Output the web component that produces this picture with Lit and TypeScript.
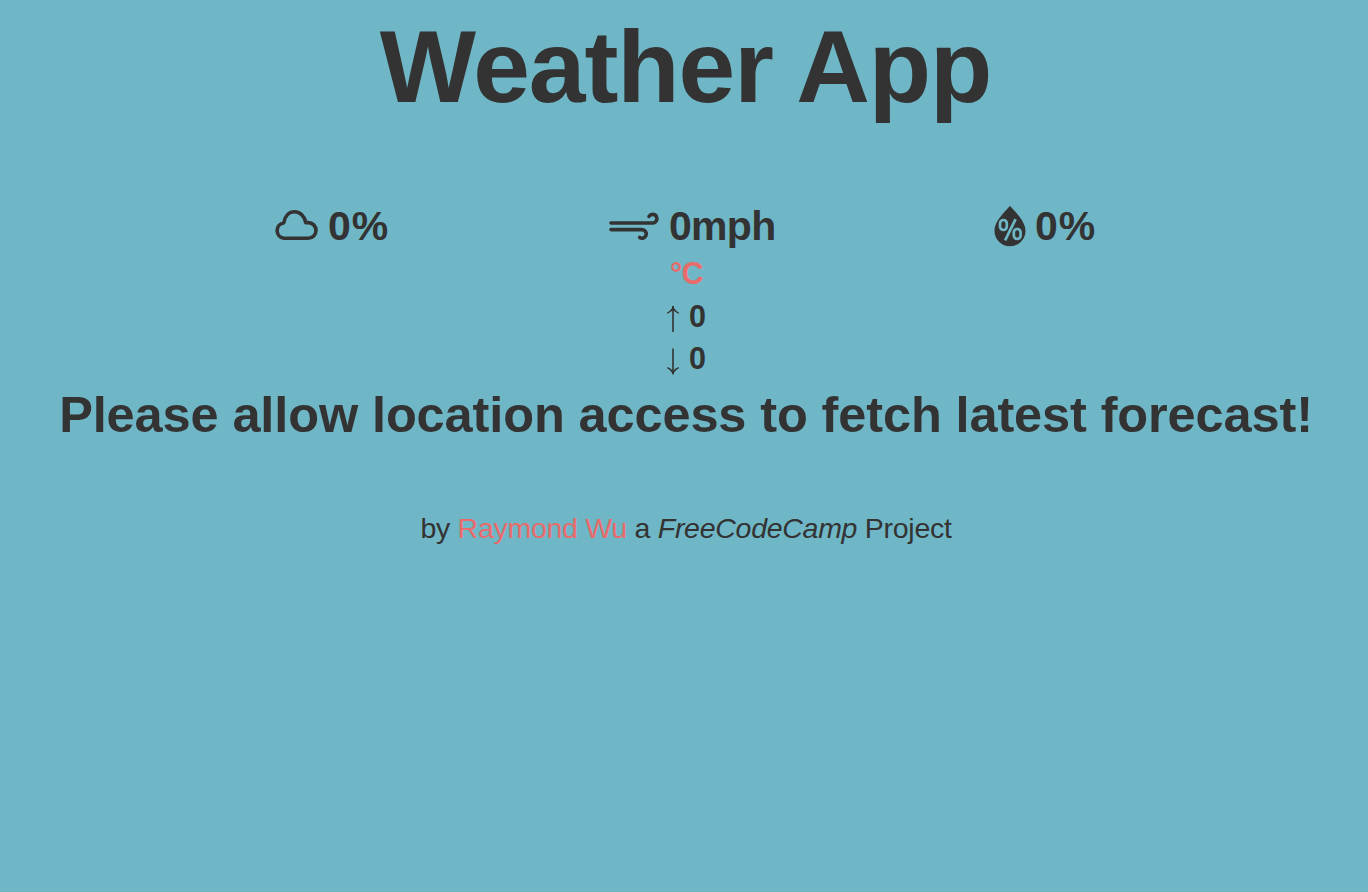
import { LitElement, html, css } from "lit";
import { customElement } from "lit/decorators.js";

@customElement("app-root")
export class AppRoot extends LitElement {
  static styles = css`
    :host {
      display: block;
      min-height: 100vh;
      box-sizing: border-box;
      background: #6fb7c6;
      color: #333;
      font-family: "Liberation Sans", Arial, sans-serif;
      overflow: hidden;
    }
    h1, h2, p { margin: 0; text-align: center; white-space: nowrap; }
    h1 {
      padding: 12px 0 0 3px;
      font-size: 102px;
      line-height: 110px;
      letter-spacing: -1.1px;
    }
    .stats {
      display: grid;
      grid-template-columns: 335px 385px 200px;
      height: 50px;
      margin-top: 79px;
      padding-left: 274px;
      font-size: 41px;
      font-weight: bold;
      line-height: 51px;
    }
    .stat { display: flex; align-items: flex-start; white-space: nowrap; }
    .stat svg { flex: none; display: block; height: 50px; overflow: visible; }
    .pct { margin-left: 10px; letter-spacing: 1px; }
    .humidity { margin-left: 9px; }
    .mph { margin-left: 10px; letter-spacing: -0.7px; }
    .temps { display: flex; flex-direction: column; align-items: center; padding-left: 5px; font-size: 30.5px; font-weight: bold; }
    .unit { height: 42px; line-height: 45px; color: #e96b6b; letter-spacing: -0.5px; }
    .limit { display: flex; height: 42px; line-height: 47px; }
    .limit svg { width: 12px; height: 42px; margin: 3px 10px 0 0; }
    h2 { padding: 10px 0 0 4px; font-size: 50.5px; line-height: 56px; letter-spacing: -0.12px; }
    p { padding: 65px 0 0 4px; font-size: 28.5px; line-height: 40px; letter-spacing: -0.28px; }
    a { color: #e96b6b; text-decoration: none; }
  `;

  render() {
    return html`
      <h1>Weather App</h1>
      <div class="stats">
        <div class="stat">
          <svg width="44" viewBox="0 0 44 50" fill="none" stroke="#333" stroke-width="3.6" stroke-linejoin="round">
            <path d="M9.8 37.2h24.4a7.8 7.8 0 0 0 0-15.6h-2.5C30.8 15.6 26.4 10.8 20.6 10.8c-5.4 0-9.5 4-10.6 10.4l-.6.8a7.7 7.7 0 0 0 .4 15.2z" />
          </svg>
          <span class="pct">0%</span>
        </div>
        <div class="stat">
          <svg width="50" viewBox="0 0 50 50" fill="none" stroke="#333" stroke-width="3.6" stroke-linecap="round">
            <path d="M2 22H43.6a4.3 4.3 0 1 0-3.6-6.6M2 28.6H33a4.3 4.3 0 1 1-2.4 7.9" />
          </svg>
          <span class="mph">0mph</span>
        </div>
        <div class="stat">
          <svg width="32" viewBox="0 0 32 50">
            <path fill="#333" d="M16 4.8C18 8 31.5 19 31.5 29.8a15.5 15.5 0 0 1-31 0C.5 19 14 8 16 4.8z" />
            <g fill="none" stroke="#6fb7c6" stroke-width="2.7">
              <rect x="6" y="19" width="6.8" height="10" rx="3.4" />
              <rect x="19.8" y="28" width="6.8" height="10" rx="3.4" />
              <path d="M21.6 18.1 11.1 39.4" />
            </g>
          </svg>
          <span class="pct humidity">0%</span>
        </div>
      </div>
      <div class="temps">
        <div class="unit">°C</div>
        <div class="limit">
          <svg viewBox="0 0 12 42" fill="none" stroke="#333" stroke-width="1.6">
            <path d="M6 36V10" /><path fill="#333" stroke="none" d="M6 9.5C7 13 9.3 15.3 12 16.5v1.2C9.4 16.8 7.5 15.6 6 13.8 4.5 15.6 2.6 16.8 0 17.7v-1.2C2.7 15.3 5 13 6 9.5z" />
          </svg>0
        </div>
        <div class="limit">
          <svg viewBox="0 0 12 42" fill="none" stroke="#333" stroke-width="1.6">
            <path d="M6 10.5V36" /><path fill="#333" stroke="none" d="M6 37.2C7 33.7 9.3 31.4 12 30.2V29C9.4 29.9 7.5 31.1 6 32.9 4.5 31.1 2.6 29.9 0 29v1.2C2.7 31.4 5 33.7 6 37.2z" />
          </svg>0
        </div>
      </div>
      <h2>Please allow location access to fetch latest forecast!</h2>
      <p>by <a>Raymond Wu</a> a <em>FreeCodeCamp</em> Project</p>
    `;
  }
}
